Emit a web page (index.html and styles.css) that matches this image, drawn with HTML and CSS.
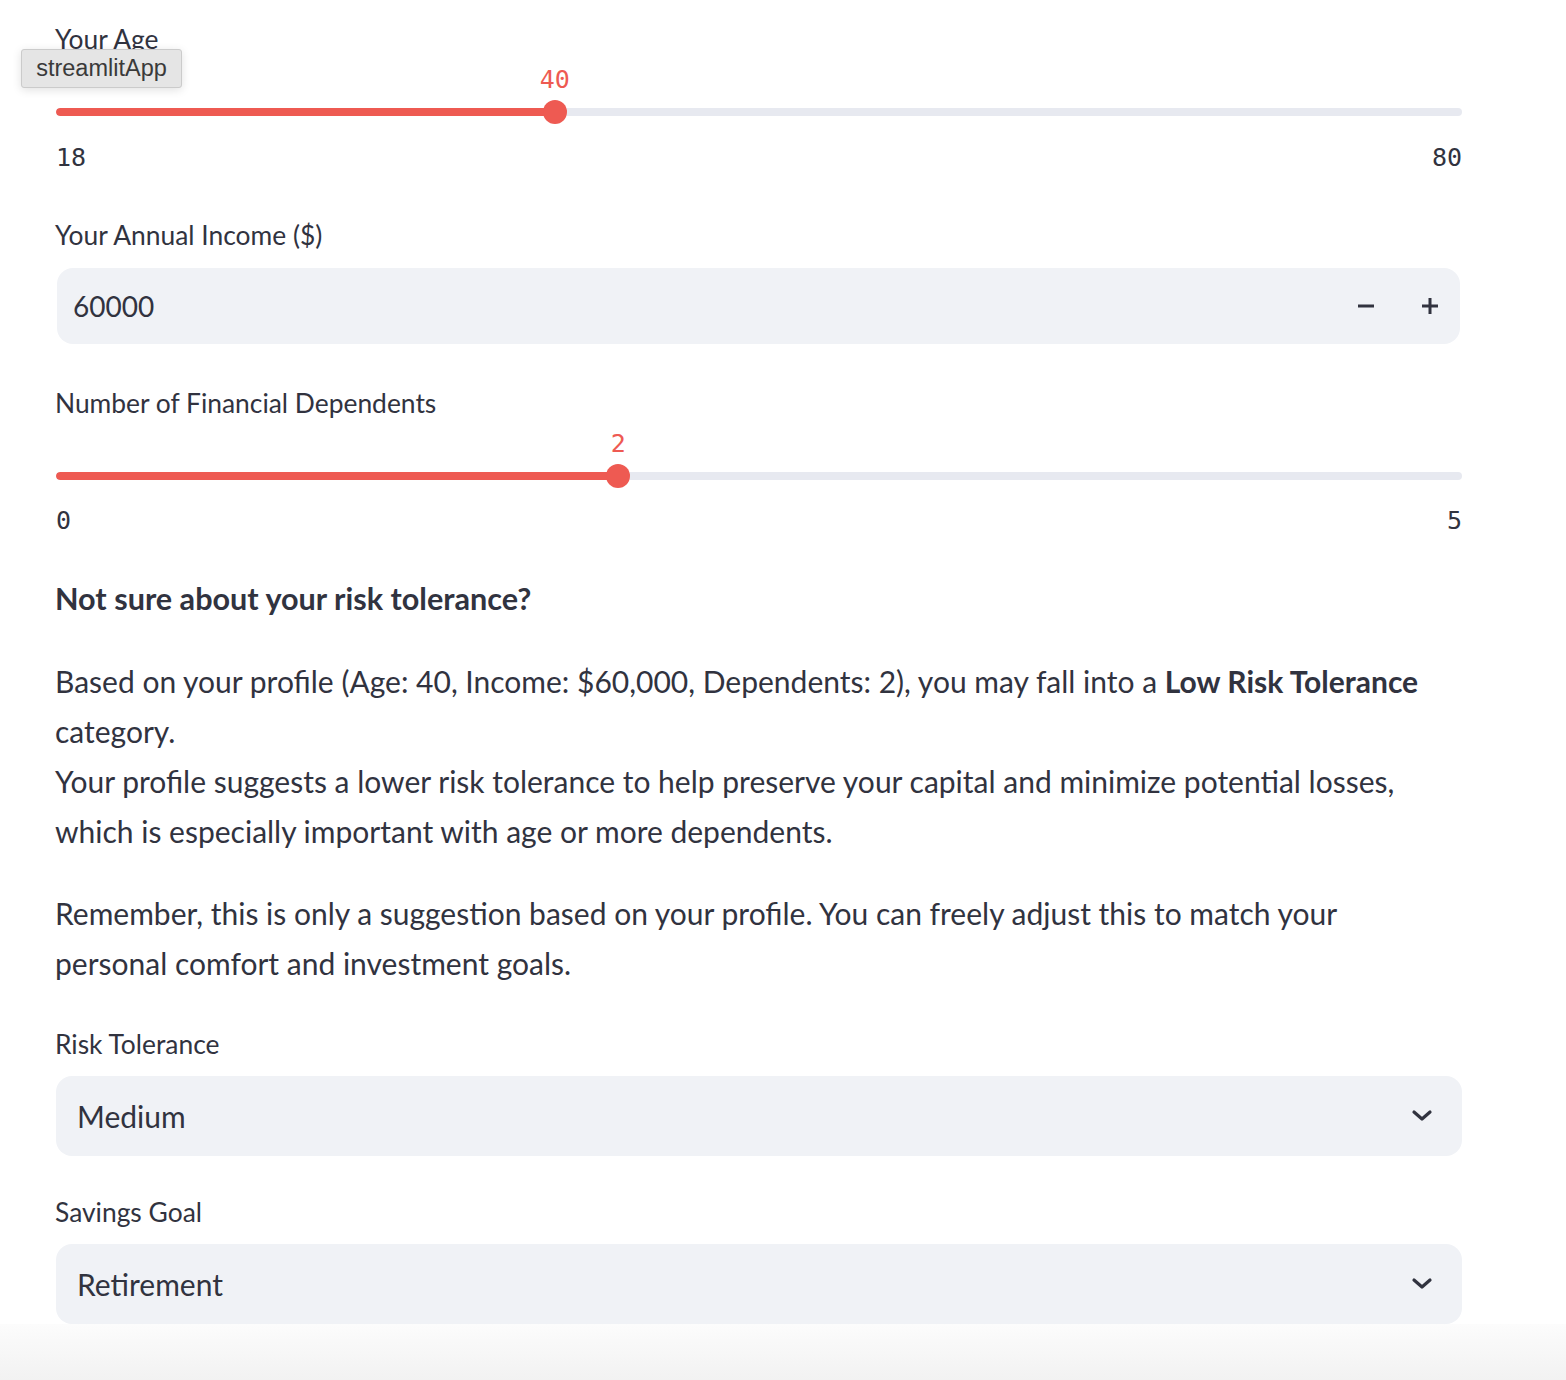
FILE: index.html
```html
<!DOCTYPE html>
<html>
<head>
<meta charset="utf-8">
<link rel="stylesheet" href="styles.css">
</head>
<body>
<div class="main">
  <div class="widget age">
    <div class="label">Your Age</div>
    <div class="slider">
      <div class="value-row"><span class="thumb-value" style="left: 35.48%">40</span></div>
      <div class="track-area">
        <div class="track"><div class="fill" style="width: 35.48%"></div></div>
        <div class="thumb" style="left: 35.48%"></div>
      </div>
      <div class="minmax"><span>18</span><span>80</span></div>
    </div>
  </div>

  <div class="widget income">
    <div class="label">Your Annual Income ($)</div>
    <div class="number-input">
      <span class="num-value">60000</span>
      <div class="steps">
        <svg class="step" width="20" height="20" viewBox="0 0 20 20"><rect x="2" y="8.5" width="16" height="3" fill="#31333f"/></svg>
        <svg class="step" width="20" height="20" viewBox="0 0 20 20"><rect x="2" y="8.5" width="16" height="3" fill="#31333f"/><rect x="8.5" y="2" width="3" height="16" fill="#31333f"/></svg>
      </div>
    </div>
  </div>

  <div class="widget deps">
    <div class="label">Number of Financial Dependents</div>
    <div class="slider">
      <div class="value-row"><span class="thumb-value" style="left: 40%">2</span></div>
      <div class="track-area">
        <div class="track"><div class="fill" style="width: 40%"></div></div>
        <div class="thumb" style="left: 40%"></div>
      </div>
      <div class="minmax"><span>0</span><span>5</span></div>
    </div>
  </div>

  <div class="heading">Not sure about your risk tolerance?</div>

  <p class="para first">Based on your profile (Age: 40, Income: $60,000, Dependents: 2), you may fall into a <strong>Low Risk Tolerance</strong> category.<br>Your profile suggests a lower risk tolerance to help preserve your capital and minimize potential losses, which is especially important with age or more dependents.</p>

  <p class="para second">Remember, this is only a suggestion based on your profile. You can freely adjust this to match your personal comfort and investment goals.</p>

  <div class="widget risk">
    <div class="label">Risk Tolerance</div>
    <div class="select">
      <span class="sel-value">Medium</span>
      <svg class="chevron" width="24" height="24" viewBox="0 0 24 24"><path d="M4 8 L12 15 L20 8" fill="none" stroke="#31333f" stroke-width="3.2" stroke-linecap="round" stroke-linejoin="round"/></svg>
    </div>
  </div>

  <div class="widget goal">
    <div class="label">Savings Goal</div>
    <div class="select">
      <span class="sel-value">Retirement</span>
      <svg class="chevron" width="24" height="24" viewBox="0 0 24 24"><path d="M4 8 L12 15 L20 8" fill="none" stroke="#31333f" stroke-width="3.2" stroke-linecap="round" stroke-linejoin="round"/></svg>
    </div>
  </div>
</div>

<div class="tooltip">streamlitApp</div>
<div class="bottom-fade"></div>
</body>
</html>
```

FILE: styles.css
```css
html, body {
  margin: 0;
  padding: 0;
  background: #ffffff;
}

body {
  font-family: Lato, "Noto Sans", sans-serif;
  color: #31333f;
  width: 1566px;
  height: 1380px;
  overflow: hidden;
  position: relative;
}

.main {
  width: 1406px;
  margin-left: 56px;
  padding-top: 19px;
  display: flex;
  flex-direction: column;
}

.widget {
  display: flex;
  flex-direction: column;
}

.label {
  font-size: 26.4px;
  line-height: 40px;
  height: 40px;
  margin-left: -1px;
}

.slider {
  display: flex;
  flex-direction: column;
}

.value-row {
  position: relative;
  height: 40px;
}

.thumb-value {
  position: absolute;
  top: 1px;
  transform: translateX(-50%);
  font-family: "DejaVu Sans Mono", "Liberation Mono", monospace;
  font-size: 25px;
  line-height: 40px;
  color: #ee5a52;
}

.track-area {
  position: relative;
  height: 26px;
}

.track {
  position: absolute;
  left: 0;
  right: 0;
  top: 9px;
  height: 8px;
  border-radius: 4px;
  background: #e7e9f0;
  overflow: hidden;
}

.fill {
  height: 100%;
  background: #ee5a52;
  border-radius: 4px 0 0 4px;
}

.thumb {
  position: absolute;
  top: 1px;
  width: 24px;
  height: 24px;
  margin-left: -12px;
  border-radius: 50%;
  background: #ee5a52;
}

.minmax {
  display: flex;
  justify-content: space-between;
  margin-top: 13px;
  height: 40px;
  line-height: 40px;
  font-family: "DejaVu Sans Mono", "Liberation Mono", monospace;
  font-size: 25px;
}

.income {
  margin-top: 37px;
}

.number-input {
  margin: 13px 2px 0 1px;
  height: 76px;
  border-radius: 16px;
  background: #f0f2f6;
  display: flex;
  align-items: center;
  justify-content: space-between;
  padding: 0 20px 0 16px;
}

.num-value {
  font-size: 28px;
}

.steps {
  display: flex;
  gap: 44px;
  align-items: center;
}

.step {
  display: block;
}

.deps {
  margin-top: 39px;
}

.deps .minmax {
  margin-top: 12px;
}

.heading {
  margin-top: 38px;
  font-size: 30.6px;
  font-weight: 700;
  line-height: 40px;
  margin-left: -1px;
}

.para {
  margin: 0 0 0 -1px;
  font-size: 30px;
  line-height: 50px;
}

.para.first {
  margin-top: 37px;
}

.para.second {
  margin-top: 32px;
  max-width: 1390px;
}

.risk {
  margin-top: 36px;
}

.goal {
  margin-top: 36px;
}

.select {
  margin-top: 12px;
  height: 80px;
  border-radius: 16px;
  background: #f0f2f6;
  display: flex;
  align-items: center;
  justify-content: space-between;
  padding: 0 28px 0 21px;
}

.sel-value {
  font-size: 30px;
}

.chevron {
  display: block;
}

.tooltip {
  position: absolute;
  left: 21px;
  top: 49px;
  width: 161px;
  height: 39px;
  box-sizing: border-box;
  background: #e5e5e5;
  border: 1px solid #cbcbcb;
  border-radius: 3px;
  box-shadow: 0 2px 10px rgba(0, 0, 0, 0.12);
  font-family: "Liberation Sans", Arial, sans-serif;
  font-size: 23.5px;
  line-height: 37px;
  text-align: center;
  color: #3a3a3a;
}

.bottom-fade {
  position: absolute;
  left: 0;
  right: 0;
  bottom: 0;
  height: 56px;
  background: linear-gradient(to bottom, #fcfcfc, #f2f2f2);
}
```
